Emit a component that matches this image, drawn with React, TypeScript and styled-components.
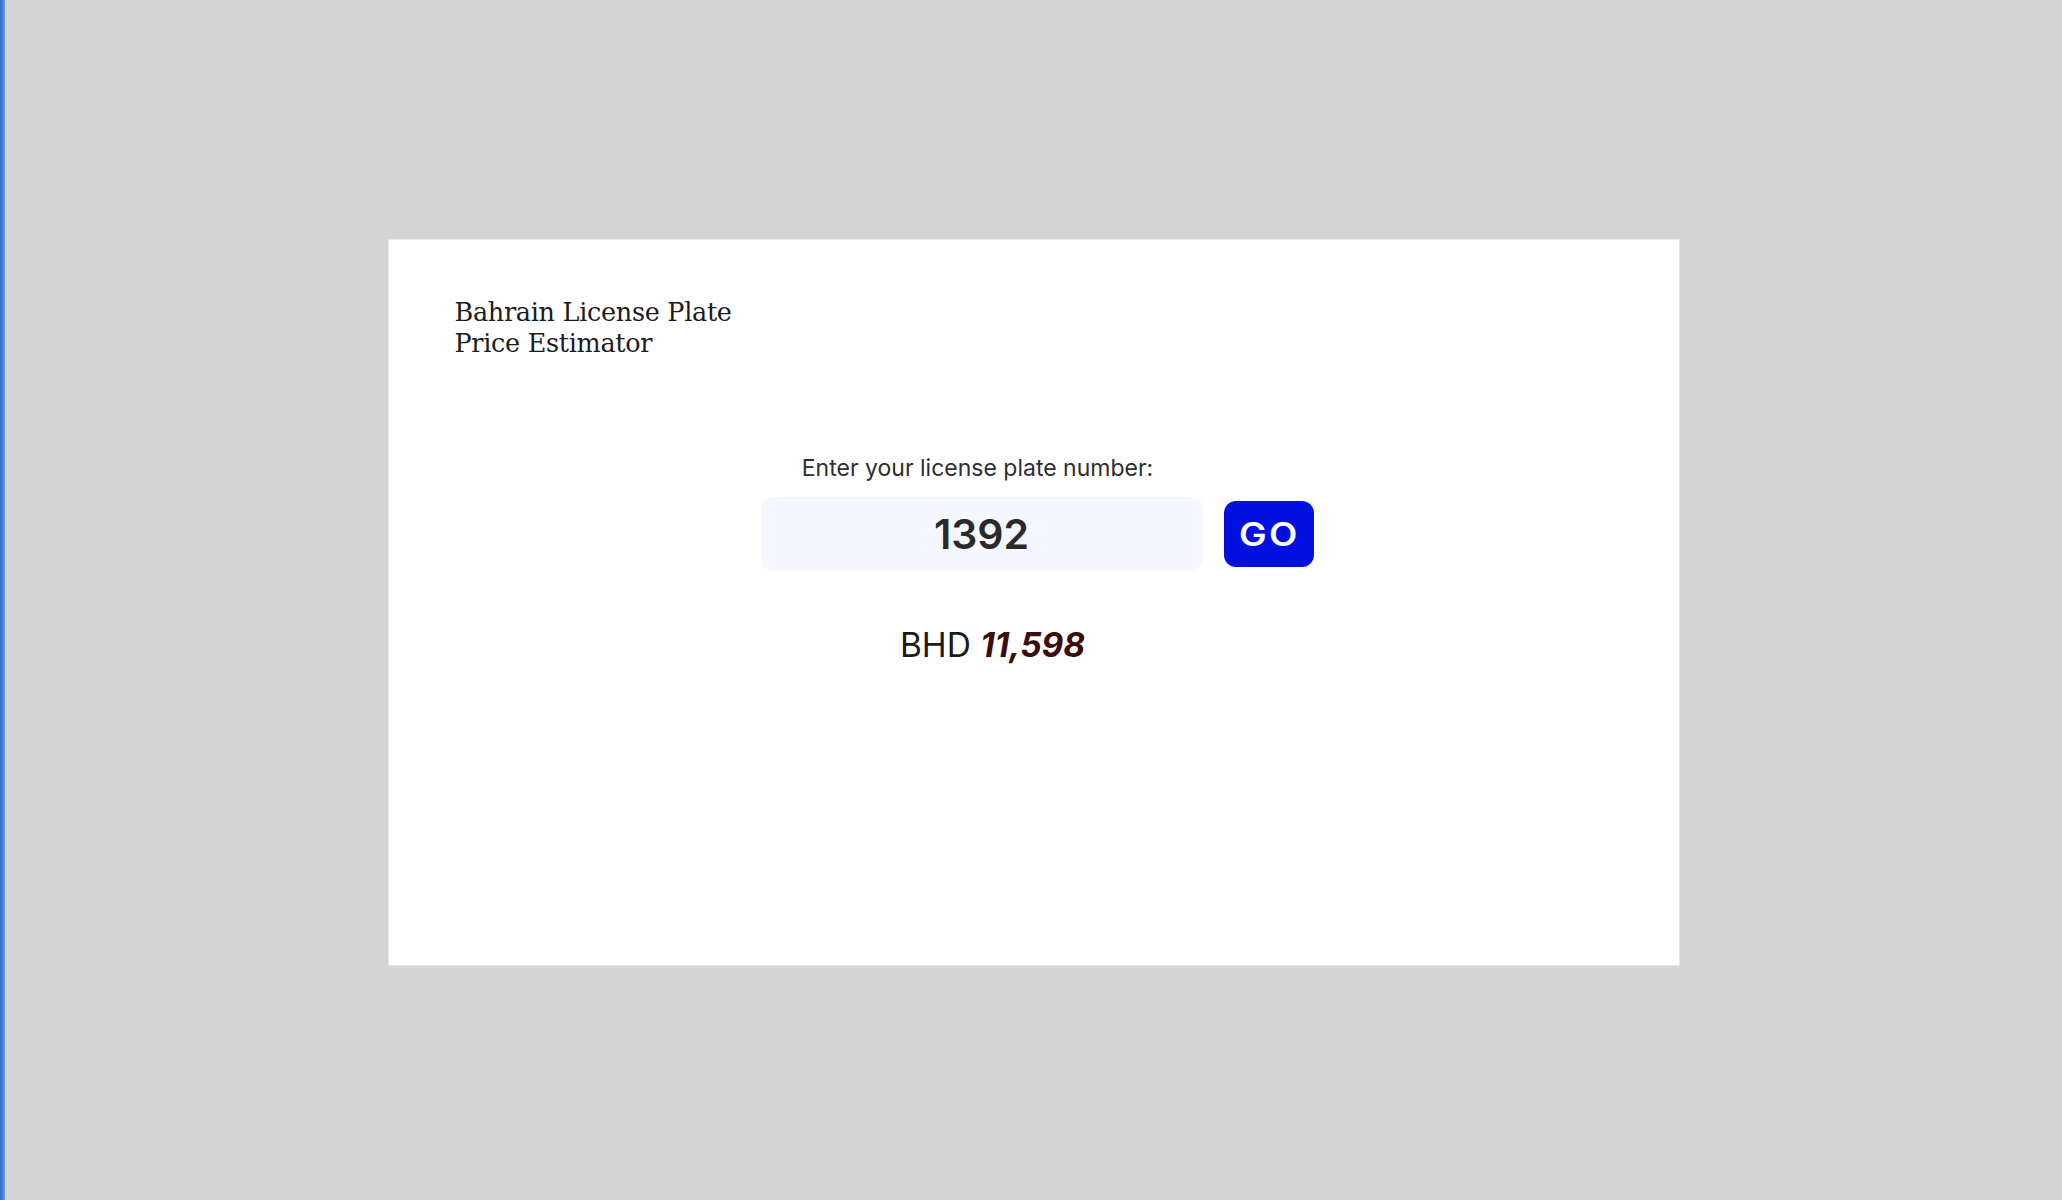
import styled, { createGlobalStyle } from 'styled-components'

const GlobalStyle = createGlobalStyle`
  html, body {
    margin: 0;
    padding: 0;
    background: #d4d4d4;
  }
  #root {
    min-height: 100vh;
  }
`

const Screen = styled.div`
  display: flex;
  min-height: 100vh;
  background: #d4d4d4;
`

const EdgeBar = styled.div`
  width: 5px;
  flex-shrink: 0;
  background: linear-gradient(90deg, #2f6cc4 0%, #4a86dc 60%, #6a9ee0 100%);
`

const Stage = styled.div`
  flex: 1;
  display: flex;
  align-items: center;
  justify-content: center;
  padding-top: 5px;
`

const Card = styled.section`
  width: 1290px;
  height: 725px;
  box-sizing: border-box;
  background: #ffffff;
  box-shadow: 0 0 0 1px #e6e6e6;
  padding: 57px 0 0 66px;
  display: flex;
  flex-direction: column;
`

const Title = styled.h1`
  margin: 0;
  font-family: 'DejaVu Serif', 'Liberation Serif', serif;
  font-weight: normal;
  font-size: 25.5px;
  line-height: 31px;
  color: #1c1c1c;
  letter-spacing: -0.3px;
`

const Main = styled.div`
  display: flex;
  flex-direction: column;
  align-items: center;
  margin: 95px 0 0 -66px;
  padding-left: 7px;
  font-family: Inter, 'Noto Sans', sans-serif;
`

const Form = styled.form`
  display: grid;
  grid-template-columns: 442px 90px;
  column-gap: 21px;
  row-gap: 15px;
  align-items: center;
`

const Label = styled.label`
  grid-column: 1;
  padding-right: 8px;
  text-align: center;
  font-size: 23px;
  line-height: 28px;
  color: #2e2e2e;
`

const PlateInput = styled.input`
  grid-column: 1;
  width: 100%;
  height: 74px;
  box-sizing: border-box;
  border: none;
  outline: none;
  border-radius: 12px;
  background: #f4f7ff;
  text-align: center;
  font-family: Inter, 'Noto Sans', sans-serif;
  font-size: 41px;
  font-weight: 600;
  color: #2a2a2a;
`

const GoButton = styled.button`
  grid-column: 2;
  width: 90px;
  height: 66px;
  border: none;
  border-radius: 12px;
  background: #0211e0;
  color: #ffffff;
  font-family: Inter, 'Noto Sans', sans-serif;
  font-size: 32px;
  font-weight: 600;
  cursor: pointer;
  display: flex;
  align-items: center;
  justify-content: center;
  padding: 0;
`

const GoText = styled.span`
  display: inline-block;
  letter-spacing: 2px;
  margin-right: -2px;
  transform: scaleX(1.15);
`

const Result = styled.p`
  grid-column: 1;
  margin: 39px 0 0;
  padding-left: 22px;
  text-align: center;
  font-size: 33.5px;
  line-height: 40px;
  color: #1a1a1a;
`

const Price = styled.span`
  font-weight: 700;
  font-style: italic;
  color: #3b0d0d;
`

export default function App() {
  return (
    <>
      <GlobalStyle />
      <Screen>
        <EdgeBar />
        <Stage>
          <Card>
            <Title>
              Bahrain License Plate
              <br />
              Price Estimator
            </Title>
            <Main>
              <Form onSubmit={(e) => e.preventDefault()}>
                <Label htmlFor="plate">Enter your license plate number:</Label>
                <span />
                <PlateInput id="plate" defaultValue="1392" />
                <GoButton type="submit">
                  <GoText>GO</GoText>
                </GoButton>
                <Result>
                  BHD <Price>11,598</Price>
                </Result>
              </Form>
            </Main>
          </Card>
        </Stage>
      </Screen>
    </>
  )
}
